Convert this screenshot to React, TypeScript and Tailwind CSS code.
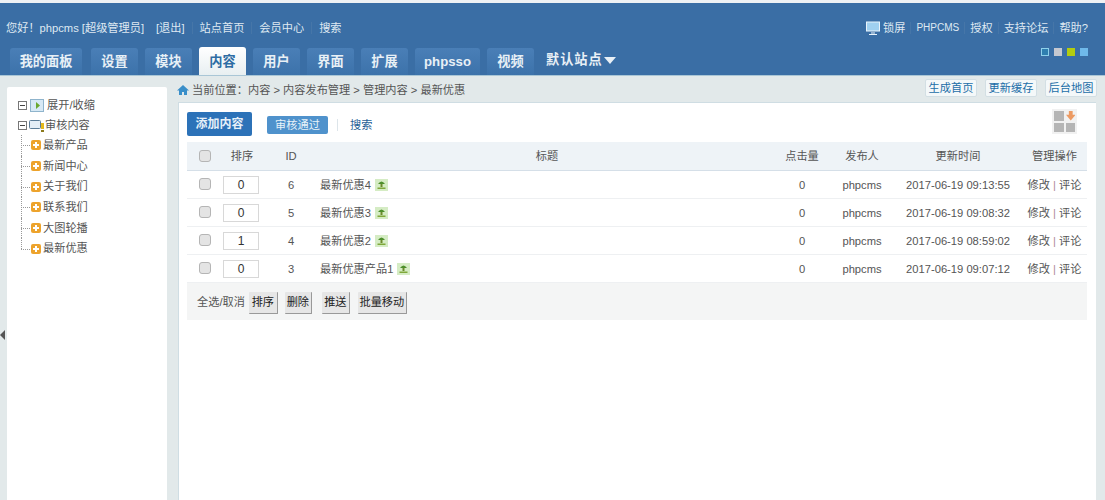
const font = { fontFamily: '"Liberation Sans", "Noto Sans CJK SC", sans-serif' }

const tabs = [
  { name: '我的面板', w: 'w-[72px] mr-[2px]' },
  { name: '设置', w: 'w-[47px]' },
  { name: '模块', w: 'w-[47px]' },
  { name: '内容', w: 'w-[47px]', active: true },
  { name: '用户', w: 'w-[47px]' },
  { name: '界面', w: 'w-[47px]' },
  { name: '扩展', w: 'w-[47px]' },
  { name: 'phpsso', w: 'w-[65px]' },
  { name: '视频', w: 'w-[47px]' },
]

const treeItems = ['最新产品', '新闻中心', '关于我们', '联系我们', '大图轮播', '最新优惠']

const rows = [
  { order: 0, id: 6, title: '最新优惠4', time: '2017-06-19 09:13:55' },
  { order: 0, id: 5, title: '最新优惠3', time: '2017-06-19 09:08:32' },
  { order: 1, id: 4, title: '最新优惠2', time: '2017-06-19 08:59:02' },
  { order: 0, id: 3, title: '最新优惠产品1', time: '2017-06-19 09:07:12' },
]

function Sep() {
  return <span className="mx-[7px] inline-block h-[12px] w-px bg-[#4676a8]" />
}

function SepRight() {
  return <span className="mx-[5px] inline-block h-[12px] w-px bg-[#4676a8]" />
}

function Checkbox() {
  return <span className="-mt-[2px] inline-block size-[12px] rounded-[3px] border border-[#b5b5b5] bg-[#e4e4e4]" />
}

function ThumbIcon() {
  return (
    <svg width="13" height="12" viewBox="0 0 13 12" className="ml-[4px] shrink-0">
      <rect width="13" height="12" fill="#d5ecc4" />
      <path d="M3 5q3.500-5 7 0z" fill="#4e8f2c" />
      <path d="M5.500 5h2v3h-2z" fill="#6b8a2c" />
      <path d="M2.500 8.500h8v1.500h-8z" fill="#7fa83a" />
    </svg>
  )
}

function PlusIcon() {
  return (
    <svg width="10" height="10" viewBox="0 0 10 10" className="shrink-0">
      <rect width="10" height="10" rx="2" fill="#eda32c" />
      <path d="M5 2v6M2 5h6" stroke="#fff" strokeWidth="2" />
    </svg>
  )
}

function MinusBox() {
  return (
    <svg width="9" height="9" viewBox="0 0 9 9" className="shrink-0">
      <rect x="0.5" y="0.5" width="8" height="8" fill="#fff" stroke="#777" />
      <path d="M2 4.500h5" stroke="#444" />
    </svg>
  )
}

function ActionButton({ children, className }: { children: string; className: string }) {
  return (
    <button className={`h-[22px] rounded-[1px] border-r border-b border-[#999] bg-[#e6e6e6] text-[#222] ${className}`}>
      {children}
    </button>
  )
}

function TopButton({ children }: { children: string }) {
  return (
    <a className="flex h-[18px] w-[52px] items-center justify-center rounded-[2px] border border-[#d3dfe4] bg-[#f4f8f9] text-[#1b6ea8]">
      {children}
    </a>
  )
}

export default function App() {
  return (
    <div className="flex h-[500px] w-[1105px] flex-col overflow-hidden bg-[#e2e9ea] text-[11.2px] text-[#555]" style={font}>
      <div className="h-[3px] bg-[#eef1f4]" />
      <header className="flex h-[73px] flex-col justify-between border-b border-[#a9c6d6] bg-[#3a6ea5]">
        <div className="flex items-start justify-between pt-[18px] pr-[17px] pl-[6px] text-[#dfe9f2]">
          <div className="flex h-[14px] items-center leading-[14px]">
            <span>您好！phpcms [超级管理员]</span>
            <span className="ml-[12px]">[退出]</span>
            <Sep />
            <span>站点首页</span>
            <Sep />
            <span>会员中心</span>
            <Sep />
            <span>搜索</span>
          </div>
          <div className="flex flex-col items-end">
            <div className="flex h-[14px] items-center leading-[14px]">
              <svg width="14" height="14" viewBox="0 0 14 14" className="mr-[3px]">
                <rect x="0.500" y="1" width="13" height="9" fill="#9fd0f0" stroke="#e8f3fb" />
                <path d="M5 12h4M3 13.500h8" stroke="#e8f3fb" />
              </svg>
              <span>锁屏</span>
              <SepRight />
              <span className="text-[10px]">PHPCMS</span>
              <SepRight />
              <span>授权</span>
              <SepRight />
              <span>支持论坛</span>
              <SepRight />
              <span>帮助?</span>
            </div>
            <div className="mt-[13px] flex gap-[5px]">
              <span className="size-[8px] border border-[#8fd0ea] bg-[#2f7fb0]" />
              <span className="size-[8px] bg-[#c5c8d0]" />
              <span className="size-[8px] bg-[#b3cc0e]" />
              <span className="size-[8px] bg-[#6fb9ea]" />
            </div>
          </div>
        </div>
        <nav className="-mt-[16px] flex items-end gap-[7px] pl-[10px]">
          {tabs.map((tab) => (
            <a
              key={tab.name}
              className={
                tab.active
                  ? `flex h-[28px] ${tab.w} items-center justify-center rounded-t-[3px] bg-gradient-to-b from-white to-[#e8eff1] pt-[1px] text-[13.2px] font-bold text-[#2e6da4]`
                  : `flex h-[27px] ${tab.w} items-center justify-center rounded-t-[3px] bg-gradient-to-b from-[#4a7fb7] to-[#3c72aa] pt-[1px] text-[13.2px] font-bold text-[#e8f0f6]`
              }
            >
              {tab.name}
            </a>
          ))}
          <a className="ml-[5px] flex h-[29px] items-center pb-[1px] text-[13.2px] font-bold tracking-[1px] text-[#e8f0f6]">
            默认站点
            <span className="ml-[1px] h-0 w-0 border-x-[6px] border-t-[7px] border-x-transparent border-t-[#e8f0f6]" />
          </a>
        </nav>
      </header>

      <div className="flex min-h-0 flex-1">
        <div className="flex w-[7px] shrink-0 items-center pt-[94px]">
          <span className="h-0 w-0 border-y-[5px] border-r-[5px] border-y-transparent border-r-[#555]" />
        </div>
        <aside className="mt-[11px] w-[160px] shrink-0 rounded-t-[2px] bg-white pt-[9px] pl-[11px]">
          <div className="flex h-[18px] items-center">
            <MinusBox />
            <svg width="14" height="13" viewBox="0 0 14 13" className="ml-[3px]">
              <rect x="0.500" y="0.500" width="13" height="12" fill="#d7e9f5" stroke="#8fb4cc" />
              <path d="M6 3l4 3.500L6 10z" fill="#6aa82f" />
            </svg>
            <span className="ml-[3px]">展开/收缩</span>
          </div>
          <div className="mt-[2px] flex h-[18px] items-center">
            <MinusBox />
            <svg width="16" height="13" viewBox="0 0 16 13" className="ml-[2px]">
              <rect x="0.500" y="1.500" width="11" height="8" rx="1" fill="#e4eef6" stroke="#5c7d98" />
              <rect x="12" y="4" width="3" height="6" fill="#e5b81c" />
              <rect x="12" y="11" width="3" height="2" fill="#8c7a1c" />
            </svg>
            <span>审核内容</span>
          </div>
          <ul className="mt-[1px] ml-[3px]">
            {treeItems.map((item, i) => (
              <li key={item} className="relative flex h-[20.700px] items-center pl-[10px]">
                <span
                  className={`absolute top-0 left-0 border-l border-dotted border-[#999] ${
                    i === treeItems.length - 1 ? 'h-1/2' : 'h-full'
                  }`}
                />
                <span className="absolute top-1/2 left-0 w-[9px] border-t border-dotted border-[#999]" />
                <PlusIcon />
                <span className="ml-[2px]">{item}</span>
              </li>
            ))}
          </ul>
        </aside>
        <div className="w-[11px] shrink-0" />

        <main className="flex w-[918px] shrink-0 flex-col">
          <div className="flex h-[26px] items-center justify-between pt-[2px]">
            <div className="-ml-[1px] flex items-center">
              <svg width="12" height="12" viewBox="0 0 12 12" className="mr-[3px]">
                <path d="M6 1L0 6.500h2V11h3V8h2v3h3V6.500h2z" fill="#3a8fc9" />
              </svg>
              <span>当前位置：内容 &gt; 内容发布管理 &gt; 管理内容 &gt; 最新优惠</span>
            </div>
            <div className="-mt-[4px] -mr-[1px] flex gap-[8px]">
              <TopButton>生成首页</TopButton>
              <TopButton>更新缓存</TopButton>
              <TopButton>后台地图</TopButton>
            </div>
          </div>

          <div className="flex-1 border-t border-l border-[#cfdde3] bg-white pt-[9px] pl-[8px]">
            <div className="flex h-[30px] items-start justify-between">
              <div className="flex items-center">
                <a className="flex h-[24px] w-[65px] items-center justify-center rounded-[2px] bg-[#2c72b8] text-[12px] font-bold text-[#e6f0f8]">
                  添加内容
                </a>
                <a className="mt-[2px] ml-[15px] flex h-[18px] w-[61px] items-center justify-center rounded-[2px] bg-[#4f92cc] text-[#e8f2f9]">
                  审核通过
                </a>
                <span className="mt-[2px] ml-[9px] h-[12px] w-px bg-[#dde5ea]" />
                <a className="mt-[2px] ml-[12px] text-[#1f5f96]">搜索</a>
              </div>
              <div className="mr-[19px] -mt-[3px] grid size-[25px] grid-cols-2 grid-rows-2 gap-[2px] bg-[#f1f1f1] p-[2px]">
                <span className="bg-[#b5b5b5]" />
                <svg viewBox="0 0 10 10" className="size-full">
                  <path d="M3 0h4v4h3L5 10 0 4h3z" fill="#ec9a62" />
                </svg>
                <span className="bg-[#b5b5b5]" />
                <span className="bg-[#b5b5b5]" />
              </div>
            </div>

            <table className="w-[900px] table-fixed border-collapse">
              <colgroup>
                <col className="w-[36px]" />
                <col className="w-[36px]" />
                <col className="w-[61px]" />
                <col className="w-[454px]" />
                <col className="w-[56px]" />
                <col className="w-[64px]" />
                <col className="w-[128px]" />
                <col className="w-[65px]" />
              </colgroup>
              <thead>
                <tr className="h-[28px] border-b border-[#d5dfe8] bg-[#eef3f7] text-center">
                  <th className="pt-[2px] font-normal"><span className="flex justify-center"><Checkbox /></span></th>
                  <th className="pt-[2px] pl-[2px] font-normal">排序</th>
                  <th className="pt-[2px] pl-[3px] font-normal">ID</th>
                  <th className="pt-[2px] font-normal">标题</th>
                  <th className="pt-[2px] font-normal">点击量</th>
                  <th className="pt-[2px] font-normal">发布人</th>
                  <th className="pt-[2px] font-normal">更新时间</th>
                  <th className="pt-[2px] font-normal">管理操作</th>
                </tr>
              </thead>
              <tbody>
                {rows.map((row) => (
                  <tr key={row.id} className="h-[28px] border-b border-[#eef0f2] text-center">
                    <td className="pt-[2px]"><span className="flex justify-center"><Checkbox /></span></td>
                    <td className="pt-[2px]">
                      <span className="mx-auto flex h-[18px] w-[36px] items-center justify-center border border-[#d8d8d8] bg-white text-[12px] text-[#333]">
                        {row.order}
                      </span>
                    </td>
                    <td className="pt-[2px] pl-[3px]">{row.id}</td>
                    <td className="pt-[2px] text-left">
                      <span className="flex items-center">
                        {row.title}
                        <ThumbIcon />
                      </span>
                    </td>
                    <td className="pt-[2px]">0</td>
                    <td className="pt-[2px]">phpcms</td>
                    <td className="pt-[2px]">{row.time}</td>
                    <td className="pt-[2px]">修改 <span className="text-[#b08a9a]">|</span> 评论</td>
                  </tr>
                ))}
              </tbody>
            </table>

            <div className="flex h-[37px] w-[900px] items-center gap-[7px] bg-[#f4f5f5] pt-[3px] pl-[10px]">
              <span className="mr-[-3px]">全选/取消</span>
              <ActionButton className="w-[29px]">排序</ActionButton>
              <ActionButton className="mr-[3px] w-[27px]">删除</ActionButton>
              <ActionButton className="mr-[1px] w-[28px]">推送</ActionButton>
              <ActionButton className="w-[49px]">批量移动</ActionButton>
            </div>
          </div>
        </main>
      </div>
    </div>
  )
}
